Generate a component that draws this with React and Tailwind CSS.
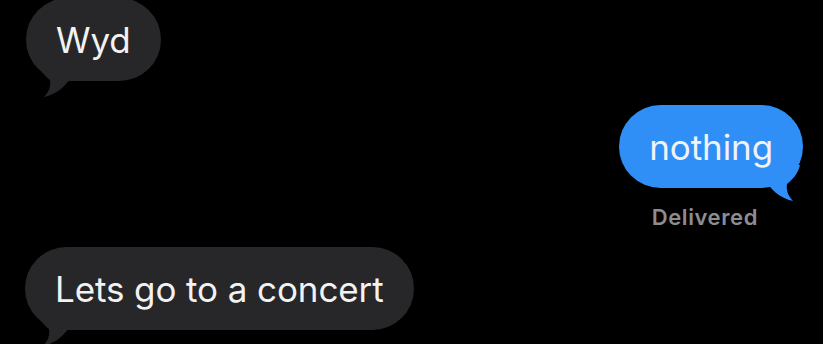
import React from "react";

function Tail({ color, side }) {
  const pos =
    side === "right"
      ? "absolute right-[-2px] bottom-[-17px]"
      : "absolute left-[6px] bottom-[-20px] scale-x-[-1]";
  return (
    <svg className={pos} width="45" height="45" viewBox="0 0 45 45" aria-hidden="true">
      <path
        d="M3 16 C10 30 20 38 33 41 C28 36 26 30 27 24 C32 20 38 14 40 5 L20 5 Z"
        fill={color}
      />
    </svg>
  );
}

function Bubble({ text, color, side }) {
  return (
    <div
      className="relative rounded-full pt-[22px] pb-[21px] px-[30px] text-[35px] leading-[40px] tracking-[-0.1px] text-[#f2f2f2]"
      style={{ backgroundColor: color }}
    >
      <span className="relative z-10">{text}</span>
      <Tail color={color} side={side} />
    </div>
  );
}

export default function App() {
  return (
    <div
      className="w-[823px] h-[344px] overflow-hidden bg-black flex flex-col"
      style={{ fontFamily: "Inter, 'Liberation Sans', Arial, sans-serif" }}
    >
      <div className="flex pl-[26px] mt-[-2px]">
        <Bubble text="Wyd" color="#27272a" side="left" />
      </div>
      <div className="flex flex-col items-end pr-[20px] mt-[24px]">
        <Bubble text="nothing" color="#2f8ff6" side="right" />
        <div className="mt-[16px] mr-[45px] text-[22px] leading-[26px] font-semibold tracking-[0.6px] text-[#8d8d90]">
          Delivered
        </div>
      </div>
      <div className="flex pl-[25px] mt-[17px]">
        <Bubble text="Lets go to a concert" color="#27272a" side="left" />
      </div>
    </div>
  );
}
